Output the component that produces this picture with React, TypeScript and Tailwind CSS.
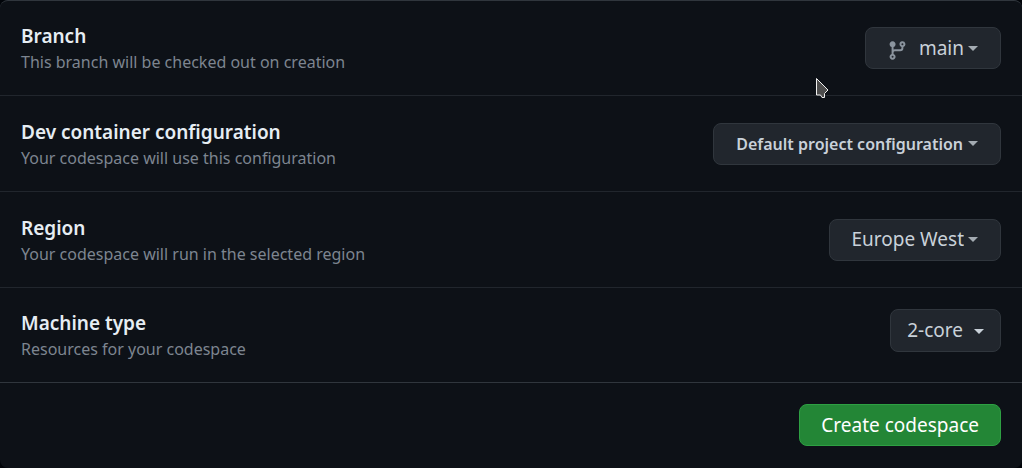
import React from "react";

type Variant = "plain" | "branch" | "strong" | "machine";

interface Setting {
  id: string;
  title: string;
  description: string;
  value: string;
  variant: Variant;
}

const settings: Setting[] = [
  { id: "branch", title: "Branch", description: "This branch will be checked out on creation", value: "main", variant: "branch" },
  { id: "devcontainer", title: "Dev container configuration", description: "Your codespace will use this configuration", value: "Default project configuration", variant: "strong" },
  { id: "region", title: "Region", description: "Your codespace will run in the selected region", value: "Europe West", variant: "plain" },
  { id: "machine", title: "Machine type", description: "Resources for your codespace", value: "2-core", variant: "machine" },
];

const selectStyles: Record<Variant, string> = {
  plain: "h-[42px] pl-[21px] pr-[36px] text-[19px]",
  branch: "h-[42px] pl-[53px] pr-[36px] text-[19px]",
  strong: "h-[42px] pl-[22px] pr-[37px] text-base font-semibold",
  machine: "h-[43px] pl-4 pr-[37px] text-[19px]",
};

function BranchIcon() {
  return (
    <svg viewBox="0 0 16 16" aria-hidden="true" className="pointer-events-none z-10 col-start-1 row-start-1 ml-[22px] mt-1 size-[21px] self-center justify-self-start fill-[#8b949e]">
      <path d="M11.75 2.5a.75.75 0 100 1.5.75.75 0 000-1.5zm-2.25.75a2.25 2.25 0 113 2.122V6A2.5 2.5 0 0110 8.5H6a1 1 0 00-1 1v1.128a2.251 2.251 0 11-1.5 0V5.372a2.25 2.25 0 111.5 0v1.836A2.492 2.492 0 016 7h4a1 1 0 001-1v-.628A2.25 2.25 0 019.5 3.25zM4.25 12a.75.75 0 100 1.5.75.75 0 000-1.5zM3.5 3.25a.75.75 0 111.5 0 .75.75 0 01-1.5 0z" />
    </svg>
  );
}

function Dropdown({ setting }: { setting: Setting }) {
  const machine = setting.variant === "machine";
  return (
    <div className={`grid shrink-0 ${machine ? "mt-[21px] self-start" : ""}`}>
      <select
        id={setting.id}
        defaultValue={setting.value}
        className={`col-start-1 row-start-1 cursor-pointer appearance-none rounded-lg border border-[#30363d] bg-[#21262d] text-[#c9d1d9] [field-sizing:content] ${selectStyles[setting.variant]}`}
      >
        <option>{setting.value}</option>
      </select>
      {setting.variant === "branch" && <BranchIcon />}
      <svg
        viewBox="0 0 10 5"
        aria-hidden="true"
        className={`pointer-events-none z-10 col-start-1 row-start-1 h-[5px] w-[10px] self-center justify-self-end ${machine ? "mr-[17px] mt-0.5 fill-[#c9d1d9]" : "mr-[23px] fill-[#a4abb2]"}`}
      >
        <path d="M0 0h10L5 5z" />
      </svg>
    </div>
  );
}

function Cursor() {
  return (
    <svg viewBox="0 0 14 22" aria-hidden="true" className="pointer-events-none absolute left-[815px] top-[77px] h-[22px] w-[14px]">
      <path d="M1.5 1.5L13 13L9.5 16.5V20.5H7L5.5 18H1.5Z" fill="#4d4d4d" stroke="#f0f0f0" strokeWidth="1" />
    </svg>
  );
}

export default function App() {
  return (
    <main className="relative min-h-screen bg-[#010409] font-['Noto_Sans',sans-serif]">
      <form className="rounded-lg border-t border-[#30363d] bg-[#0d1117]" onSubmit={(e) => e.preventDefault()}>
        {settings.map((setting) => (
          <div
            key={setting.id}
            className="flex min-h-24 items-center justify-between gap-4 border-b border-[#21262d] px-[21px] first:min-h-[95px] nth-4:min-h-[95px] nth-4:border-[#30363d]"
          >
            <div className="pt-0.5">
              <label htmlFor={setting.id} className="block text-[19px] font-semibold leading-[26px] text-[#e6edf3]">
                {setting.title}
              </label>
              <p className="text-base leading-[26px] text-[#7d8590]">{setting.description}</p>
            </div>
            <Dropdown setting={setting} />
          </div>
        ))}
        <div className="flex justify-end px-[21px] pb-[22px] pt-[21px]">
          <button type="submit" className="h-[42px] cursor-pointer rounded-lg border border-[#2ea043] bg-[#238636] px-[21px] text-[19px] text-white">
            Create codespace
          </button>
        </div>
      </form>
      <Cursor />
    </main>
  );
}
